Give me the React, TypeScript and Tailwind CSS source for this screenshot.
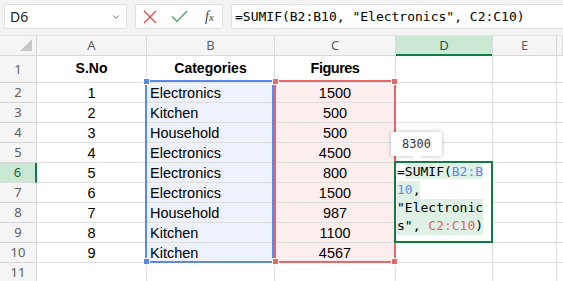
import { ChevronDown } from "lucide-react";

const cols = ["A", "B", "C", "D", "E", ""];

const rows: [string, string, string][] = [
  ["1", "Electronics", "1500"],
  ["2", "Kitchen", "500"],
  ["3", "Household", "500"],
  ["4", "Electronics", "4500"],
  ["5", "Electronics", "800"],
  ["6", "Electronics", "1500"],
  ["7", "Household", "987"],
  ["8", "Kitchen", "1100"],
  ["9", "Kitchen", "4567"],
];

const gridCols = "grid grid-cols-[37px_110px_128px_121px_97px_64px_1fr]";
const cellFont = "font-['Liberation_Sans',Arial,sans-serif] text-[14.5px] text-black";
const uiFont = "font-['Noto_Sans',sans-serif]";
const mono = "font-['DejaVu_Sans_Mono',monospace]";

function Toolbar() {
  return (
    <div className="flex h-[36px] items-start gap-[8px] border-b border-[#e3e3e3] bg-[#f3f3f3] pl-[4px] pt-[4px]">
      <div className={`flex h-[25px] w-[123px] items-center justify-between rounded-[2px] border border-[#e1e1e1] bg-white pl-[5px] pr-[5px] ${uiFont} text-[14px] text-[#242424]`}>
        <span>D6</span>
        <ChevronDown className="h-[10px] w-[10px] text-[#555]" strokeWidth={2} />
      </div>
      <div className="flex h-[25px] w-[88px] items-center gap-[14px] rounded-[2px] border border-[#e1e1e1] bg-white pl-[7px]">
        <svg width="14" height="14" viewBox="0 0 14 14">
          <path d="M1 1 L13 13 M13 1 L1 13" stroke="#e0453d" strokeWidth="1.2" fill="none" />
        </svg>
        <svg width="17" height="13" viewBox="0 0 17 13">
          <path d="M1 6.5 L6 11.5 L16 1" stroke="#3aa35e" strokeWidth="1.2" fill="none" />
        </svg>
        <span className="ml-[3px] font-['Liberation_Serif',serif] text-[14px] italic text-[#444]">
          f<span className="text-[11px]">x</span>
        </span>
      </div>
      <div className={`flex h-[25px] flex-1 items-center rounded-l-[2px] border border-r-0 border-[#e1e1e1] bg-white pl-[3px] ${mono} text-[13px] text-black`}>
        =SUMIF(B2:B10, "Electronics", C2:C10)
      </div>
    </div>
  );
}

function HeaderRow() {
  return (
    <div className={`${gridCols} h-[19px] bg-[#f5f5f5] ${uiFont} text-[13px] text-[#5f5f5f]`}>
      <div className="relative border-b border-r border-[#d8d8d8]">
        <svg className="absolute bottom-[4px] right-[4px]" width="12" height="12" viewBox="0 0 12 12">
          <path d="M12 0 L12 12 L0 12 Z" fill="#c8c8c8" />
        </svg>
      </div>
      {cols.map((c) =>
        c === "D" ? (
          <div key={c} className="border-b-2 border-r border-b-[#107c41] border-r-[#d8d8d8] bg-[#c9e9d4] text-center leading-[18px] text-[#1f5f38]">
            {c}
          </div>
        ) : (
          <div key={c || "f"} className="border-b border-r border-[#d8d8d8] text-center leading-[18px]">
            {c}
          </div>
        )
      )}
    </div>
  );
}

function RowHead({ n, active }: { n: number; active?: boolean }) {
  return (
    <div
      className={`${uiFont} border-b border-[#d8d8d8] text-center text-[13px] ${
        active
          ? "border-r-2 border-r-[#107c41] bg-[#c9e9d4] text-[#1f5f38]"
          : "border-r bg-[#f5f5f5] text-[#5f5f5f]"
      }`}
    >
      <div className={n === 1 ? "pt-[6px] leading-[17px]" : "pt-[1px] leading-[17px]"}>{n}</div>
    </div>
  );
}

function App() {
  return (
    <div className="relative h-[281px] w-[563px] overflow-hidden bg-white">
      <Toolbar />
      <HeaderRow />

      <div className={`${gridCols} h-[28px]`}>
        <RowHead n={1} />
        <div className={`border-b border-r border-[#dedede] pt-[5px] text-center font-bold leading-[17px] ${cellFont} text-[14px]`}>S.No</div>
        <div className={`border-b border-r border-[#dedede] pt-[5px] text-center font-bold leading-[17px] ${cellFont} text-[14px]`}>Categories</div>
        <div className={`border-b border-r border-[#dedede] pt-[5px] text-center font-bold leading-[17px] ${cellFont} text-[13px] tracking-[-0.5px]`}>Figures</div>
        <div className="border-b border-r border-[#dedede]" />
        <div className="border-b border-r border-[#dedede]" />
        <div className="border-b border-[#dedede]" />
      </div>

      {rows.map(([no, cat, fig], i) => (
        <div key={no} className={`${gridCols} h-[20px]`}>
          <RowHead n={i + 2} active={i + 2 === 6} />
          <div className={`border-b border-r border-[#dedede] pt-[2px] text-center leading-[17px] ${cellFont}`}>{no}</div>
          <div className={`border-b border-r border-[#dedede] bg-[#eef2fc] pl-[3px] pt-[2px] leading-[17px] ${cellFont}`}>{cat}</div>
          <div className={`border-b border-r border-[#dedede] bg-[#fdeeee] pt-[2px] text-center leading-[17px] ${cellFont}`}>{fig}</div>
          <div className="border-b border-r border-[#dedede]" />
          <div className="border-b border-r border-[#dedede]" />
          <div className="border-b border-[#dedede]" />
        </div>
      ))}

      <div className={`${gridCols} h-[20px]`}>
        <RowHead n={11} />
        <div className="border-r border-[#dedede]" />
        <div className="border-r border-[#dedede]" />
        <div className="border-r border-[#dedede]" />
        <div className="border-r border-[#dedede]" />
        <div className="border-r border-[#dedede]" />
        <div />
      </div>

      {/* B2:B10 reference range */}
      <div className="absolute left-[145px] top-[80px] h-[183px] w-[129px] border-2 border-[#5a8ae6]">
        <span className="absolute -left-[4px] -top-[4px] h-[7px] w-[7px] border border-white bg-[#5a8ae6]" />
        <span className="absolute -bottom-[4px] -left-[4px] h-[7px] w-[7px] border border-white bg-[#5a8ae6]" />
      </div>

      {/* C2:C10 reference range */}
      <div className="absolute left-[274px] top-[80px] h-[183px] w-[122px] border-2 border-[#e4686a]">
        <span className="absolute -left-[4px] -top-[4px] h-[7px] w-[7px] border border-white bg-[#e4686a]" />
        <span className="absolute -right-[4px] -top-[4px] h-[7px] w-[7px] border border-white bg-[#e4686a]" />
        <span className="absolute -bottom-[4px] -left-[4px] h-[7px] w-[7px] border border-white bg-[#e4686a]" />
        <span className="absolute -bottom-[4px] -right-[4px] h-[7px] w-[7px] border border-white bg-[#e4686a]" />
      </div>

      {/* in-cell editor */}
      <div className={`absolute left-[394px] top-[161px] h-[82px] w-[99px] border-2 border-[#107c41] bg-white pl-[1px] ${mono} text-[13px] leading-[18px] text-black`}>
        <div className="w-fit">
          =<span className="bg-[#dff0e4]">SUMIF(<span className="text-[#5b8def]">B2:B</span></span>
        </div>
        <div className="w-fit bg-[#dff0e4]">
          <span className="text-[#5b8def]">10</span>,{" "}
        </div>
        <div className="w-fit bg-[#dff0e4]">"Electronic</div>
        <div className="w-fit bg-[#dff0e4]">
          s", <span className="text-[#e06666]">C2:C10</span>)
        </div>
      </div>

      {/* result tooltip */}
      <div className="absolute left-[391px] top-[132px] flex h-[24px] w-[51px] items-center justify-center rounded-[2px] bg-white shadow-[0_0_4px_rgba(0,0,0,0.28)]">
        <span className={`${mono} text-[12px] text-[#333]`}>8300</span>
        <span className="absolute -bottom-[5px] left-[21px] h-0 w-0 border-l-[5px] border-r-[5px] border-t-[5px] border-l-transparent border-r-transparent border-t-white" />
      </div>
    </div>
  );
}

export default App;
